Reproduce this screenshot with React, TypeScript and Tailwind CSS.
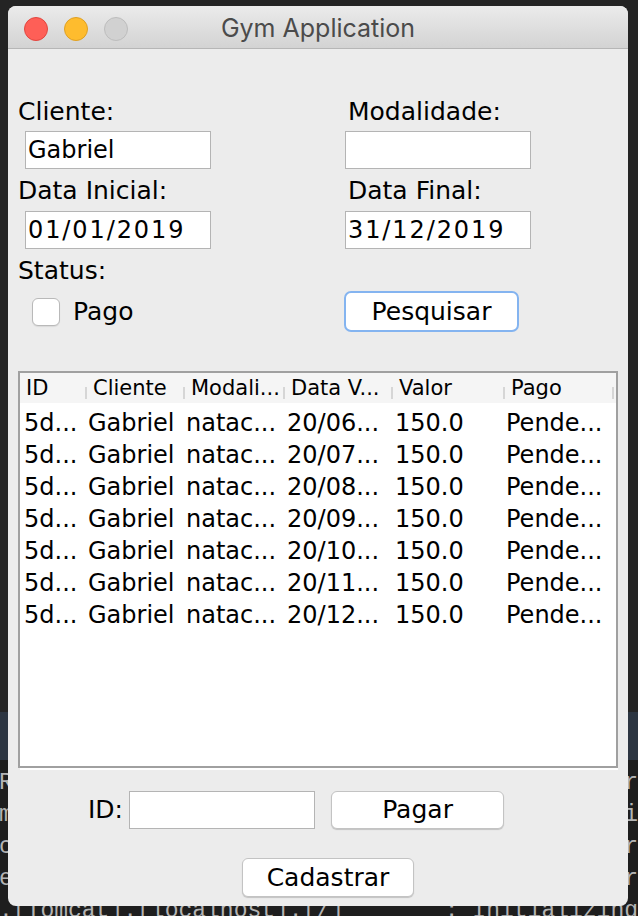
const months = ["06", "07", "08", "09", "10", "11", "12"];

const columns = [
    { title: "ID", width: "w-[67px]" },
    { title: "Cliente", width: "w-[98px]" },
    { title: "Modali...", width: "w-[100px]" },
    { title: "Data V...", width: "w-[108px]" },
    { title: "Valor", width: "w-[112px]" },
    { title: "Pago", width: "w-[109px]" },
];

const terminalLines = [
    { left: "Running", right: "server" },
    { left: "main", right: "ini" },
    { left: "context", right: "ctor" },
    { left: "engine", right: "Ser" },
    { left: ".[Tomcat].[localhost].[/]", right: ": Initializing" },
];

function Field({ value, wide }: { value?: string; wide?: boolean }) {
    return (
        <div
            className={`h-[38px] w-[186px] border border-[#b4b4b4] bg-white pl-[2px] text-[24px] leading-[36px] whitespace-nowrap ${
                wide ? "tracking-[1.9px]" : ""
            }`}
        >
            {value}
        </div>
    );
}

function Label({ children, className = "" }: { children: React.ReactNode; className?: string }) {
    return <div className={`h-[30px] text-[25px] leading-[30px] ${className}`}>{children}</div>;
}

function Button({ children, className = "" }: { children: React.ReactNode; className?: string }) {
    return (
        <div
            className={`flex items-center justify-center rounded-[6px] border border-[#c3c3c3] bg-white text-[25px] shadow-[0_1px_1px_rgba(0,0,0,0.18)] ${className}`}
        >
            {children}
        </div>
    );
}

export default function App() {
    return (
        <div className="relative h-[916px] w-[638px] overflow-hidden bg-[#1e1e1e] font-['Liberation_Mono',monospace] text-[#b4b4b4]">
            {/* desktop / terminal behind the window */}
            <div className="h-[712px] bg-[#242424]" />
            <div className="h-[48px] bg-[#2c3541]" />
            <div className="ml-[-1px] flex flex-col pt-[7px] text-[23px] leading-[32px]">
                {terminalLines.map((line) => (
                    <div key={line.left} className="flex justify-between whitespace-nowrap">
                        <span>{line.left}</span>
                        <span>{line.right}</span>
                    </div>
                ))}
            </div>

            {/* window */}
            <div className="absolute left-[8px] top-[6px] flex h-[900px] w-[620px] flex-col overflow-hidden rounded-[8px] bg-[#ececec] font-['DejaVu_Sans',sans-serif] text-black">
                <div className="flex h-[43px] shrink-0 items-center border-b border-[#b6b6b6] bg-gradient-to-b from-[#ebebeb] to-[#d3d3d3] pt-[4px]">
                    <div className="flex w-[120px] gap-[16px] pl-[16px]">
                        <span className="h-[24px] w-[24px] rounded-full border border-[#e2463f] bg-[#fe5f57]" />
                        <span className="h-[24px] w-[24px] rounded-full border border-[#dfa023] bg-[#febc2e]" />
                        <span className="h-[24px] w-[24px] rounded-full border border-[#bdbdbd] bg-[#d1d1d1]" />
                    </div>
                    <div className="flex-1 text-center font-['Inter',sans-serif] text-[25px] text-[#4b4b4b]">
                        Gym Application
                    </div>
                    <div className="w-[120px]" />
                </div>

                <div className="flex flex-col pl-[10px] pt-[48px]">
                    <div className="flex">
                        <div className="flex w-[327px] flex-col">
                            <Label>Cliente:</Label>
                            <div className="ml-[7px] mt-[4px]">
                                <Field value="Gabriel" />
                            </div>
                            <Label className="mt-[7px]">Data Inicial:</Label>
                            <div className="ml-[7px] mt-[5px]">
                                <Field value="01/01/2019" wide />
                            </div>
                            <Label className="mt-[7px]">Status:</Label>
                            <div className="mt-[5px] flex h-[41px] items-center">
                                <span className="ml-[14px] h-[28px] w-[28px] rounded-[6px] border border-[#b9b9b9] bg-white shadow-[0_1px_1px_rgba(0,0,0,0.08)]" />
                                <span className="ml-[13px] text-[25px]">Pago</span>
                            </div>
                        </div>
                        <div className="flex flex-col">
                            <Label className="ml-[3px]">Modalidade:</Label>
                            <div className="mt-[4px]">
                                <Field />
                            </div>
                            <Label className="ml-[3px] mt-[7px]">Data Final:</Label>
                            <div className="mt-[5px]">
                                <Field value="31/12/2019" wide />
                            </div>
                            <div className="ml-[-1px] mt-[42px] flex h-[41px] w-[175px] items-center justify-center rounded-[7px] border-2 border-[#84b4f0] bg-white text-[25px]">
                                Pesquisar
                            </div>
                        </div>
                    </div>

                    {/* table */}
                    <div className="mt-[39px] flex h-[397px] w-[600px] flex-col border-2 border-[#a0a0a0] bg-white">
                        <div className="flex h-[30px] bg-[#f5f5f5] text-[21px] leading-[30px]">
                            {columns.map((col) => (
                                <div key={col.title} className={`flex ${col.width} justify-between`}>
                                    <span className="pl-[6px] whitespace-nowrap">{col.title}</span>
                                    <span className="mb-[4px] h-[12px] w-[2px] self-end bg-[#d6d6d6]" />
                                </div>
                            ))}
                        </div>
                        <div className="flex flex-col pt-[4px] text-[24px] leading-[32px]">
                            {months.map((m) => (
                                <div key={m} className="flex h-[32px] whitespace-nowrap">
                                    <span className="w-[67px] pl-[4px]">5d...</span>
                                    <span className="w-[98px] pl-[1px]">Gabriel</span>
                                    <span className="w-[100px] pl-[1px]">natac...</span>
                                    <span className="w-[108px] pl-[2px]">20/{m}...</span>
                                    <span className="w-[112px] pl-[2px]">150.0</span>
                                    <span className="w-[109px] pl-[1px]">Pende...</span>
                                </div>
                            ))}
                        </div>
                    </div>
                    <div className="ml-[2px] h-[2px] w-[598px] bg-white" />

                    <div className="ml-[70px] mt-[21px] flex h-[38px] items-center">
                        <span className="text-[25px]">ID:</span>
                        <div className="ml-[6px]">
                            <Field />
                        </div>
                        <Button className="ml-[16px] h-[38px] w-[173px]">Pagar</Button>
                    </div>

                    <Button className="ml-[224px] mt-[29px] h-[39px] w-[172px]">Cadastrar</Button>
                </div>
            </div>
        </div>
    );
}
